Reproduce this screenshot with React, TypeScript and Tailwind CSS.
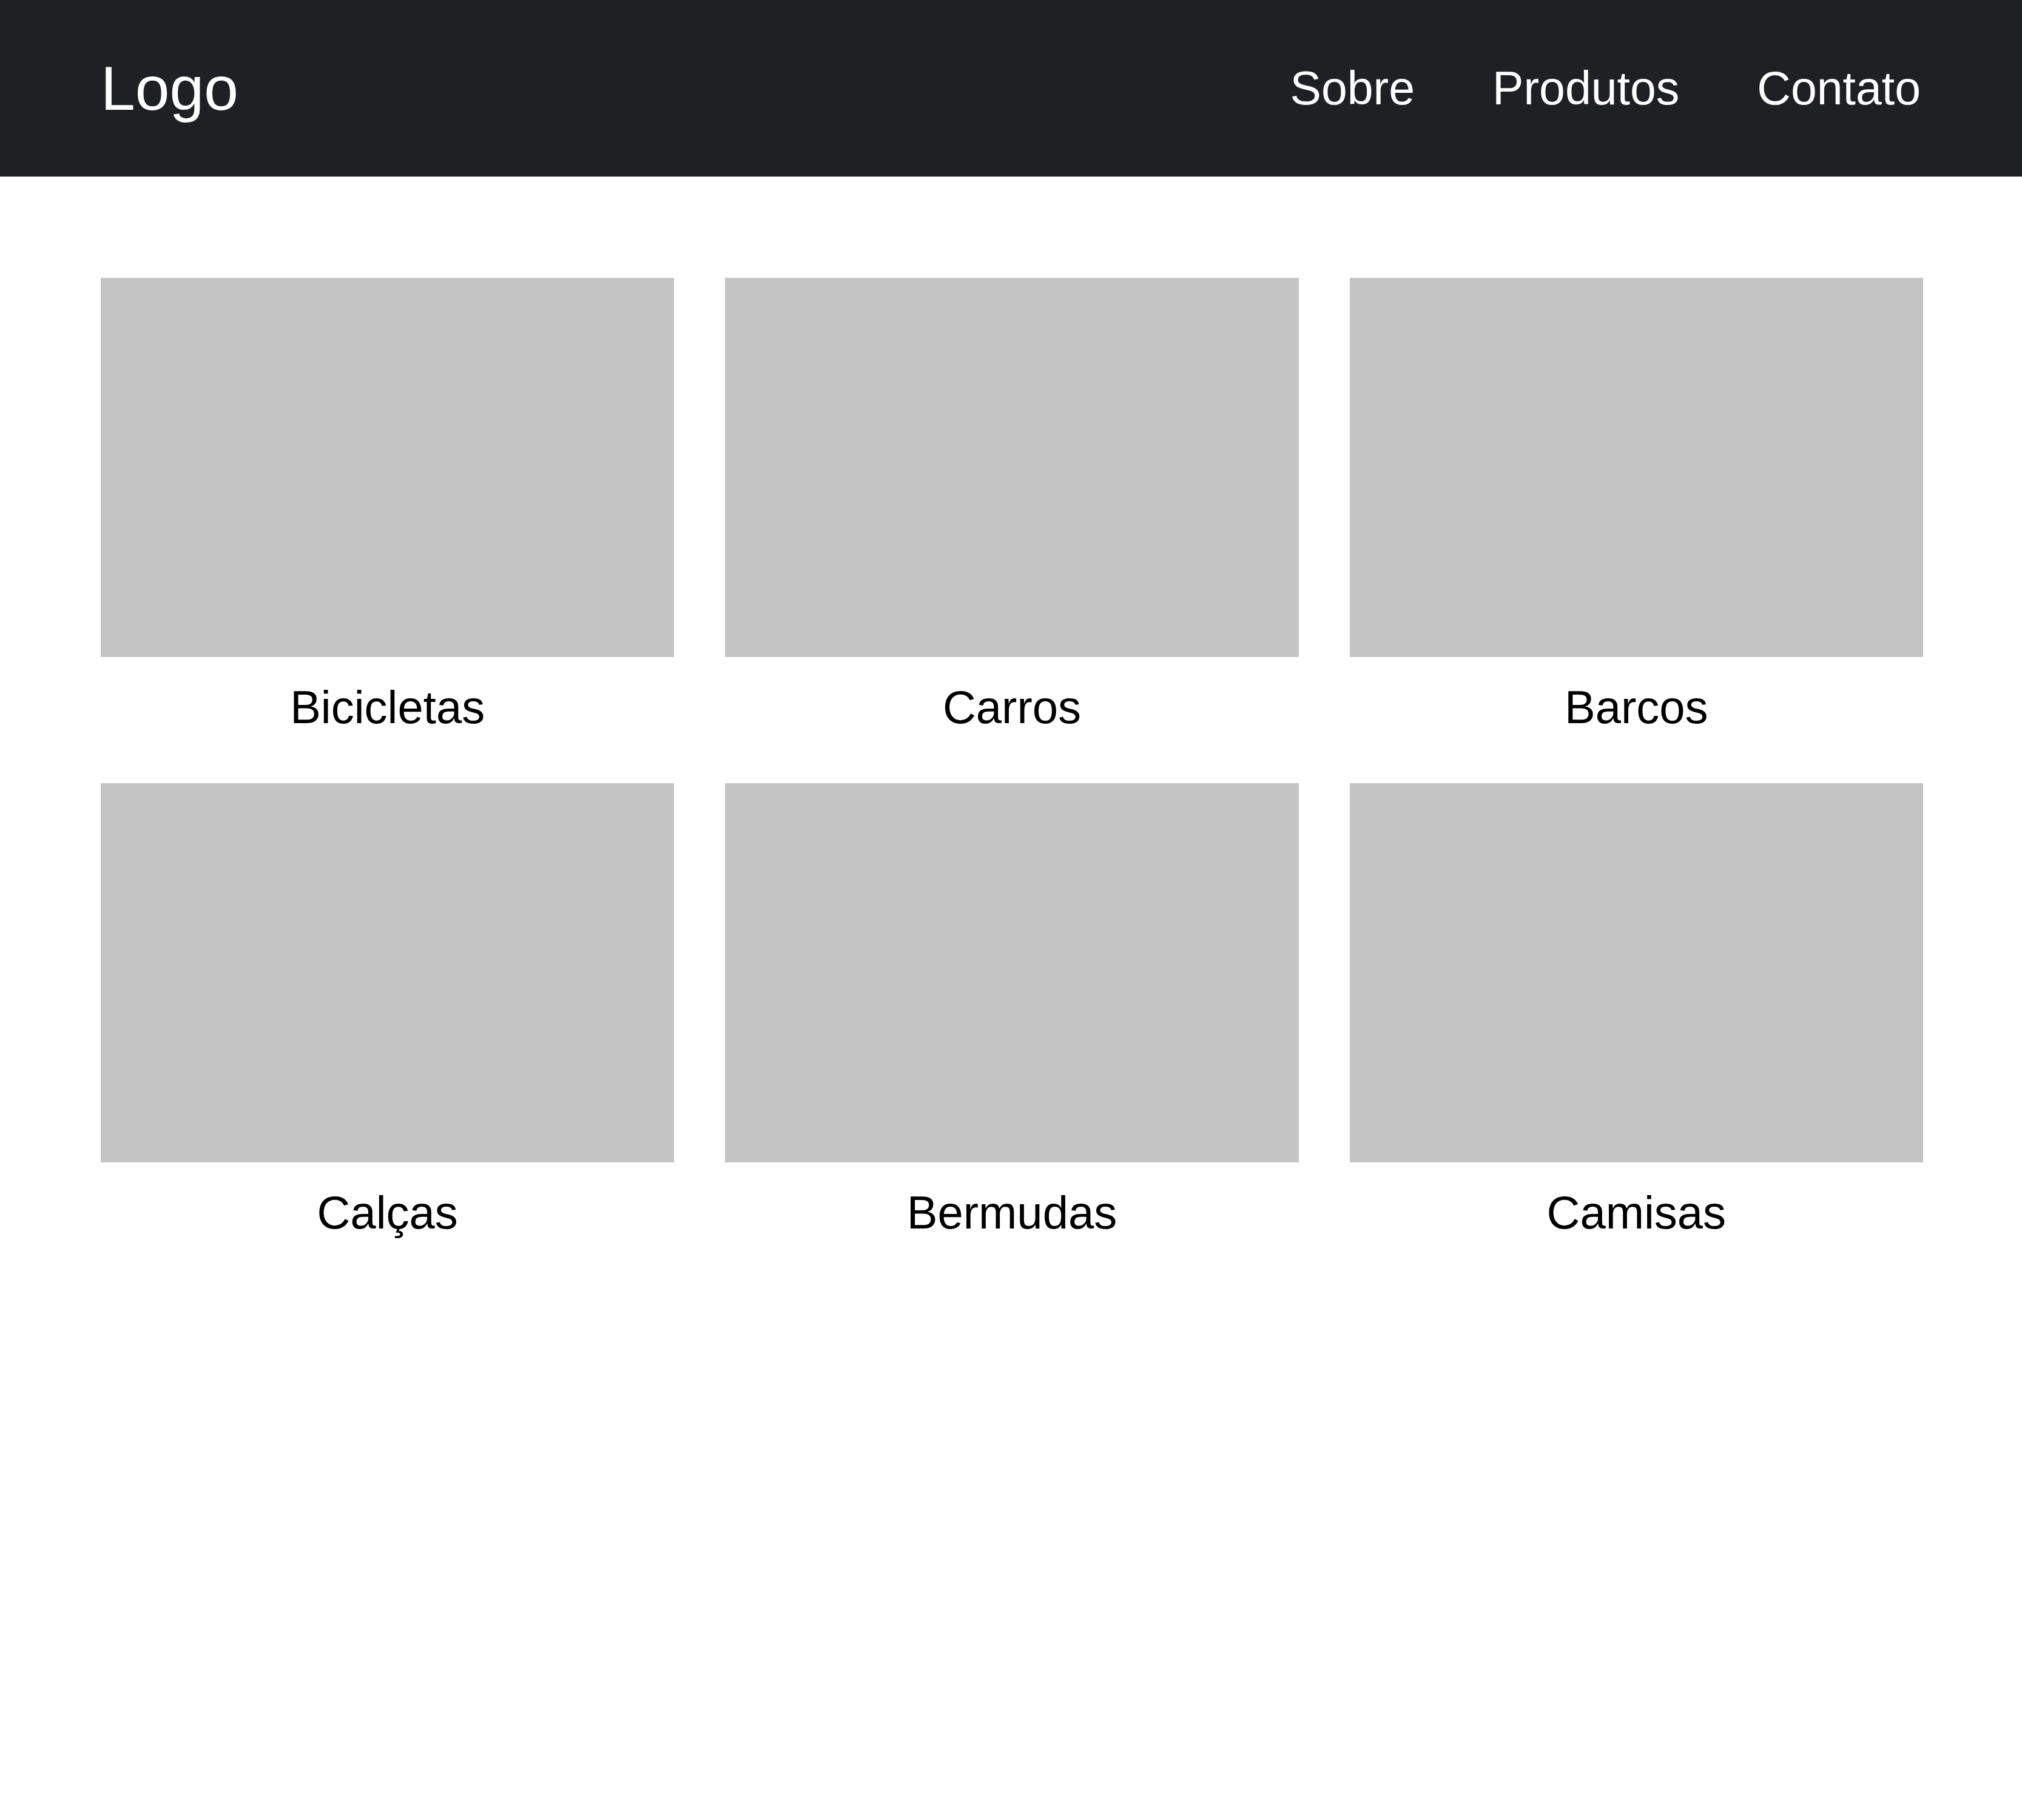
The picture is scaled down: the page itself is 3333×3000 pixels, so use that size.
const categories = ['Bicicletas', 'Carros', 'Barcos', 'Calças', 'Bermudas', 'Camisas'];

const navLinks = ['Sobre', 'Produtos', 'Contato'];

function Header() {
  return (
    <header className="flex h-[291px] items-center justify-between bg-[#1f2023] pl-[166px] pr-[167px] text-white">
      <a href="#" className="text-[102px] leading-none">
        Logo
      </a>
      <nav className="flex items-center gap-[128px]">
        {navLinks.map((link) => (
          <a key={link} href="#" className="text-[77px] leading-none">
            {link}
          </a>
        ))}
      </nav>
    </header>
  );
}

function CategoryCard({ name }: { name: string }) {
  return (
    <div className="flex flex-col">
      <div className="h-[625px] w-full bg-[#c4c4c4]" />
      <p className="mt-[45px] text-center text-[76px] leading-none text-black">{name}</p>
    </div>
  );
}

export default function App() {
  return (
    <div className="min-h-[3000px] bg-white font-['Liberation_Sans',Arial,sans-serif]">
      <Header />
      <main className="grid grid-cols-3 gap-x-[84px] gap-y-[87px] pl-[166px] pr-[163px] pt-[167px]">
        {categories.map((c) => (
          <CategoryCard key={c} name={c} />
        ))}
      </main>
    </div>
  );
}
